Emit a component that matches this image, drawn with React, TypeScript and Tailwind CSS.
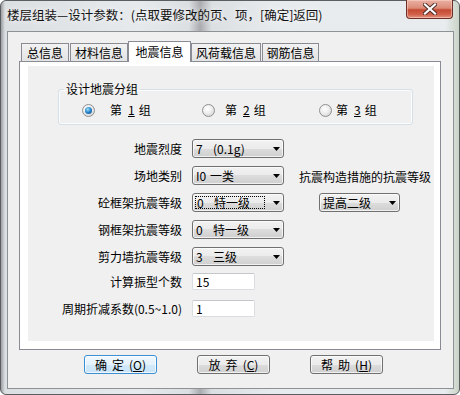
const cjk = "font-['Noto_Sans_CJK_SC',sans-serif]"

const Arrow = () => (
  <svg width="7" height="4" viewBox="0 0 7 4" className="shrink-0">
    <path d="M0 0h7L3.5 4z" fill="#000" />
  </svg>
)

const Combo = ({
  code,
  text,
  codeW = "w-[17px]",
  width = "w-[92px]",
  focus = false,
}: {
  code?: string
  text: string
  codeW?: string
  width?: string
  focus?: boolean
}) => (
  <div
    className={`flex h-[19px] ${width} items-center rounded-[3px] border border-[#707070] bg-[linear-gradient(#f2f2f2_0%,#ebebeb_50%,#dddddd_50%,#cfcfcf_100%)] pl-[2px] pr-[3px] shadow-[inset_0_0_0_1px_rgba(255,255,255,0.7)]`}
  >
    <div
      className={`flex h-[13px] items-center whitespace-nowrap pl-[1px] leading-none ${
        focus ? "mr-[8px] w-[70px] border border-dotted border-black" : "flex-1"
      }`}
    >
      {code && <span className={codeW}>{code}</span>}
      <span>{text}</span>
    </div>
    <div className="flex-1" />
    <Arrow />
  </div>
)

const Field = ({ value }: { value: string }) => (
  <div className="flex h-[17px] w-[63px] items-center rounded-[2px] border border-[#d9dce1] border-t-[#c3c6cb] bg-white pl-[3px] leading-none">
    {value}
  </div>
)

const Radio = ({ on = false }: { on?: boolean }) => (
  <span className="flex h-[13px] w-[13px] shrink-0 items-center justify-center rounded-full border border-[#8f9092] bg-[radial-gradient(circle_at_40%_35%,#ffffff_0%,#eeeeee_45%,#c9cacc_100%)]">
    {on && (
      <span className="h-[7px] w-[7px] rounded-full bg-[radial-gradient(circle_at_40%_35%,#a6e0fb_0%,#2a8ad0_45%,#0c3f7c_100%)]" />
    )}
  </span>
)

const Btn = ({ a, b, k, primary = false }: { a: string; b: string; k: string; primary?: boolean }) => (
  <div
    className={`flex h-[19px] w-[73px] items-center justify-center gap-[5px] rounded-[3px] border leading-none shadow-[inset_0_0_0_1px_rgba(255,255,255,0.7)] ${
      primary
        ? "border-[#3c8fd0] bg-[linear-gradient(#f0f8fe_0%,#e4f2fc_50%,#d3eafa_50%,#c8e4f8_100%)]"
        : "border-[#707070] bg-[linear-gradient(#f2f2f2_0%,#ebebeb_50%,#dddddd_50%,#cfcfcf_100%)]"
    }`}
  >
    <span>{a}</span>
    <span>{b}</span>
    <span>
      (<u>{k}</u>)
    </span>
  </div>
)

const tabs = [
  { t: "总信息", cls: "w-[48px]" },
  { t: "材料信息", cls: "ml-px w-[58px]" },
  { t: "地震信息", cls: "w-[63px]", on: true },
  { t: "风荷载信息", cls: "w-[70px]" },
  { t: "钢筋信息", cls: "ml-px w-[57px]" },
]

const rows = [
  { label: "地震烈度", code: "7", text: "(0.1g)" },
  { label: "场地类别", code: "I0", text: "一类", codeW: "w-[14px]" },
  { label: "砼框架抗震等级", code: "0", text: "特一级", focus: true },
  { label: "钢框架抗震等级", code: "0", text: "特一级" },
  { label: "剪力墙抗震等级", code: "3", text: "三级" },
]

export default function App() {
  return (
    <div
      className={`${cjk} flex h-[395px] w-[460px] flex-col rounded-[6px] border border-[#5a5d61] bg-[linear-gradient(90deg,#9c9ea1_0px,#dcdfe2_4px,#e7eaed_30%,#dcdfe2_41%,#a9abae_43.5%,#dcdfe2_46%,#e8ebee_60%,#e9ecee_97%,#c9d3c6_100%)] text-[12px] text-black`}
    >
      {/* title bar */}
      <div className="flex h-[30px] shrink-0 items-start justify-between">
        <div className="mt-[5px] pl-[6px] text-[12.5px] leading-[18px] text-[#111] [text-shadow:0_0_6px_#fff]">
          楼层组装—设计参数：(点取要修改的页、项，[确定]返回)
        </div>
        <div className="-mt-px mr-[6px] flex h-[19px] w-[47px] items-center justify-center rounded-b-[4px] border border-t-0 border-[#6b2f25] bg-[linear-gradient(#eab0a3_0%,#dc8b78_45%,#c44a32_55%,#d2604a_80%,#e3947f_100%)] shadow-[inset_0_0_0_1px_rgba(255,220,210,0.5)]">
          <svg width="14" height="12" viewBox="0 0 14 12">
            <path d="M2 1.5l10 9M12 1.5l-10 9" stroke="#4a2a26" strokeWidth="4" strokeLinecap="square" />
            <path d="M2 1.5l10 9M12 1.5l-10 9" stroke="#fff" strokeWidth="2.2" strokeLinecap="square" />
          </svg>
        </div>
      </div>

      {/* client area */}
      <div className="ml-[6px] flex h-[358px] w-[447px] flex-col border border-[#8d9297] bg-[#f0f0f0]">
        <div className="relative z-10 ml-[13px] mt-[9px] flex h-[20px] items-end">
          {tabs.map((x) =>
            x.on ? (
              <div
                key={x.t}
                className={`${x.cls} -mb-px flex h-[21px] items-center justify-center border border-b-0 border-[#898c95] bg-white pb-[1px] leading-none`}
              >
                {x.t}
              </div>
            ) : (
              <div
                key={x.t}
                className={`${x.cls} flex h-[18px] items-center justify-center border border-b-0 border-[#898c95] bg-[linear-gradient(#f2f2f2,#e3e3e3)] leading-none`}
              >
                {x.t}
              </div>
            )
          )}
        </div>

        {/* tab panel */}
        <div className="ml-[11px] h-[289px] w-[422px] border border-[#898c95] bg-white pb-[8px] pl-[8px] pr-[6px] pt-[4px]">
          <div className="h-full w-full bg-[#f0f0f0] pt-[15px]">
            <fieldset className="ml-[30px] w-[355px] rounded-[3px] border border-[#d5dfe5] pb-[6px] shadow-[inset_0_0_0_1px_#fafcfd]">
              <legend className="ml-[5px] px-[2px] leading-[16px]">设计地震分组</legend>
              <div className="mt-[5px] flex h-[16px] items-center pl-[23px] leading-none">
                <div className="flex w-[120px] items-center gap-[15px]">
                  <Radio on />
                  <span>
                    第<u className="ml-[6px] mr-[4px]">1</u>组
                  </span>
                </div>
                <div className="flex w-[117px] items-center gap-[10px]">
                  <Radio />
                  <span>
                    第<u className="ml-[6px] mr-[4px]">2</u>组
                  </span>
                </div>
                <div className="flex items-center gap-[4px]">
                  <Radio />
                  <span>
                    第<u className="ml-[6px] mr-[4px]">3</u>组
                  </span>
                </div>
              </div>
            </fieldset>

            <div className="mt-[14px] flex">
              <div className="flex flex-col">
                {rows.map((r, i) => (
                  <div key={r.label} className={`flex h-[19px] items-center ${i > 0 ? "mt-[8px]" : ""}`}>
                    <div className="w-[155px] pr-px text-right leading-none">{r.label}</div>
                    <div className="ml-[9px]">
                      <Combo code={r.code} text={r.text} codeW={r.codeW} focus={r.focus} />
                    </div>
                  </div>
                ))}
                <div className="mt-[7px] flex h-[17px] items-center">
                  <div className="w-[155px] pr-px text-right leading-none">计算振型个数</div>
                  <div className="ml-[9px]">
                    <Field value="15" />
                  </div>
                </div>
                <div className="mt-[10px] flex h-[17px] items-center">
                  <div className="w-[155px] whitespace-nowrap pr-px text-right leading-none">周期折减系数(0.5~1.0)</div>
                  <div className="ml-[9px]">
                    <Field value="1" />
                  </div>
                </div>
              </div>

              <div className="ml-[15px] mt-[27px] flex flex-col">
                <div className="flex h-[19px] items-center whitespace-nowrap pt-[3px] leading-none">
                  抗震构造措施的抗震等级
                </div>
                <div className="ml-[20px] mt-[8px]">
                  <Combo text="提高二级" width="w-[81px]" />
                </div>
              </div>
            </div>
          </div>
        </div>

        {/* buttons */}
        <div className="ml-[76px] mt-[5px] flex gap-[40px]">
          <Btn a="确" b="定" k="O" primary />
          <Btn a="放" b="弃" k="C" />
          <Btn a="帮" b="助" k="H" />
        </div>
      </div>
    </div>
  )
}
